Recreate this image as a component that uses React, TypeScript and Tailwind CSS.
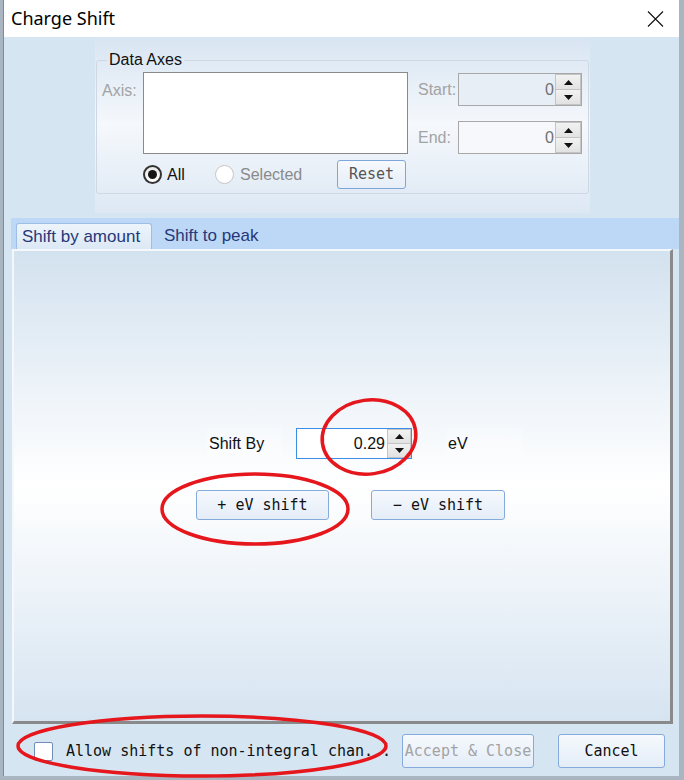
import React from "react";

const sans = { fontFamily: '"Liberation Sans", Arial, sans-serif' };
const mono = { fontFamily: '"DejaVu Sans Mono", "Liberation Mono", monospace' };

function SpinButtons({ w }: { w: string }) {
  return (
    <div className={`flex flex-col h-full ${w}`}>
      <div className="flex-1 flex items-center justify-center bg-gradient-to-b from-[#f2f2f2] to-[#e2e2e2] border border-[#c4c4c4]">
        <svg width="9" height="5" viewBox="0 0 9 5">
          <path d="M0 5 L4.5 0 L9 5 Z" fill="#111" />
        </svg>
      </div>
      <div className="flex-1 flex items-center justify-center bg-gradient-to-b from-[#f2f2f2] to-[#e2e2e2] border border-t-0 border-[#c4c4c4]">
        <svg width="9" height="5" viewBox="0 0 9 5">
          <path d="M0 0 L4.5 5 L9 0 Z" fill="#111" />
        </svg>
      </div>
    </div>
  );
}

function Radio({ checked }: { checked: boolean }) {
  return checked ? (
    <div className="w-[19px] h-[19px] rounded-full border-[2px] border-[#333] bg-gradient-to-b from-[#e9e9e9] to-white flex items-center justify-center">
      <div className="w-[9px] h-[9px] rounded-full bg-[#151515]" />
    </div>
  ) : (
    <div className="w-[19px] h-[19px] rounded-full border border-[#c6c6c6] bg-white" />
  );
}

function WinButton({
  children,
  className,
  disabled,
}: {
  children: React.ReactNode;
  className: string;
  disabled?: boolean;
}) {
  return (
    <div
      className={`flex items-center justify-center rounded-[3px] border border-[#85aadc] bg-gradient-to-b from-[#f6f9fd] to-[#e4edf8] text-[15px] ${
        disabled ? "text-[#a3a3a3]" : "text-[#111]"
      } ${className}`}
      style={mono}
    >
      {children}
    </div>
  );
}

export default function App() {
  return (
    <div className="relative w-[684px] h-[780px] bg-[#aab5c2] overflow-hidden" style={sans}>
      <div className="ml-[3px] w-[676px] h-[776px] flex flex-col bg-[#d6e5f2] border-l border-[#7f8a97]">
        {/* title bar */}
        <div className="h-[37px] shrink-0 bg-white flex items-center justify-between pl-[7px] pr-[15px]">
          <span className="text-[18px] text-black" style={{ fontFamily: '"Noto Sans", sans-serif' }}>
            Charge Shift
          </span>
          <svg width="17" height="16" viewBox="0 0 17 16">
            <path d="M1 0.5 L16 15.5 M16 0.5 L1 15.5" stroke="#111" strokeWidth="1.1" />
          </svg>
        </div>

        {/* data axes panel */}
        <div className="ml-[91px] w-[495px] h-[176px] shrink-0 pt-[13px] bg-gradient-to-b from-[#d8e5f2] via-[#f5f8fc] to-[#dde8f4]">
          <fieldset className="ml-[1px] w-[493px] border border-[#cfd8e2] rounded-[3px] pb-[4px]">
            <legend className="ml-[10px] px-[2px] text-[16px] leading-[20px] text-[#111]">Data Axes</legend>
            <div className="flex items-start mt-[2px] pl-[5px]">
              <div className="w-[41px] mt-[9px] text-[16px] leading-[20px] text-[#a3a3a3]">Axis:</div>
              <div className="w-[265px] h-[82px] bg-white border border-[#8a8a8a]" />
              <div className="ml-[10px] mt-[1px] flex flex-col gap-[15px]">
                <div className="flex items-center h-[33px]">
                  <div className="w-[40px] text-[16px] text-[#a3a3a3]">Start:</div>
                  <div className="w-[124px] h-[33px] flex border border-[#a8a8a8] bg-[#e8eef6]">
                    <div className="flex-1 flex items-center justify-end pr-[1px] text-[16px] text-[#707070]">0</div>
                    <SpinButtons w="w-[26px]" />
                  </div>
                </div>
                <div className="flex items-center h-[33px]">
                  <div className="w-[40px] text-[16px] text-[#a3a3a3]">End:</div>
                  <div className="w-[124px] h-[33px] flex border border-[#a8a8a8] bg-[#f6f8fb]">
                    <div className="flex-1 flex items-center justify-end pr-[1px] text-[16px] text-[#707070]">0</div>
                    <SpinButtons w="w-[26px]" />
                  </div>
                </div>
              </div>
            </div>
            <div className="flex items-center h-[29px] mt-[6px] pl-[46px]">
              <div className="w-[72px] flex items-center gap-[5px]">
                <Radio checked />
                <span className="text-[16px] text-[#111]">All</span>
              </div>
              <div className="w-[122px] flex items-center gap-[6px]">
                <Radio checked={false} />
                <span className="text-[16px] text-[#8a8a8a]">Selected</span>
              </div>
              <div
                className="w-[69px] h-[29px] flex items-center justify-center rounded-[3px] border border-[#7ea6d9] bg-gradient-to-b from-[#f6f9fd] to-[#e6eef8] text-[15px] text-[#555]"
                style={mono}
              >
                Reset
              </div>
            </div>
          </fieldset>
        </div>

        {/* tab strip */}
        <div className="ml-[7px] mt-[5px] h-[31px] shrink-0 bg-[#bdd8f6] flex items-end pl-[5px]">
          <div className="w-[136px] h-[26px] rounded-t-[3px] border border-b-0 border-[#9ebee6] bg-gradient-to-b from-[#eef4fb] to-[#dce8f5] flex items-center pl-[5px] text-[17px] text-[#26397a]">
            Shift by amount
          </div>
          <div className="h-[26px] flex items-center ml-[12px] text-[17px] text-[#26397a]">Shift to peak</div>
        </div>

        {/* tab page */}
        <div className="ml-[8px] w-[661px] h-[475px] shrink-0 border-t-2 border-l-2 border-t-[#f4f8fc] border-l-[#f4f8fc] border-r-[3px] border-b-[3px] border-r-[#8a8a8a] border-b-[#8a8a8a] bg-gradient-to-b from-[#d3e2ef] via-white to-[#d6e4f1]">
          <div className="mt-[177px] ml-[193px] flex items-center h-[31px]">
            <div className="w-[75px] h-[31px] flex items-center pl-[2px] bg-white/25 text-[16px] text-[#111]">Shift By</div>
            <div className="ml-[14px] w-[116px] h-[31px] flex border border-[#3b8de6] bg-white">
              <div className="flex-1 flex items-center justify-end pr-[2px] text-[16px] text-[#111]">0.29</div>
              <SpinButtons w="w-[24px]" />
            </div>
            <div className="ml-[35px] w-[76px] h-[31px] flex items-center pl-[1px] bg-white/25 text-[16px] text-[#111]">eV</div>
          </div>
          <div className="mt-[31px] ml-[182px] flex items-center">
            <WinButton className="w-[133px] h-[30px]">+ eV shift</WinButton>
            <WinButton className="ml-[42px] w-[134px] h-[30px]">− eV shift</WinButton>
          </div>
        </div>

        {/* bottom row */}
        <div className="flex items-start pt-[10px] pl-[30px] pr-[14px]">
          <div className="h-[34px] flex items-center">
            <div className="w-[19px] h-[19px] rounded-[2px] border border-[#6f8fb8] bg-white" />
            <span className="ml-[13px] text-[15px] text-[#111] whitespace-pre" style={mono}>
              Allow shifts of non-integral chan. .
            </span>
          </div>
          <div className="ml-auto flex items-center gap-[24px]">
            <WinButton className="w-[132px] h-[34px]" disabled>
              Accept &amp; Close
            </WinButton>
            <WinButton className="w-[107px] h-[34px]">Cancel</WinButton>
          </div>
        </div>
      </div>

      {/* red annotation marks */}
      <svg className="absolute inset-0 pointer-events-none" width="684" height="780" viewBox="0 0 684 780">
        <g fill="none" stroke="#e5161c" strokeWidth="3.5">
          <ellipse cx="369" cy="437" rx="47" ry="37" transform="rotate(-8 369 437)" />
          <ellipse cx="255" cy="509" rx="93" ry="35" />
          <ellipse cx="202" cy="746" rx="184" ry="30" />
        </g>
      </svg>
    </div>
  );
}
